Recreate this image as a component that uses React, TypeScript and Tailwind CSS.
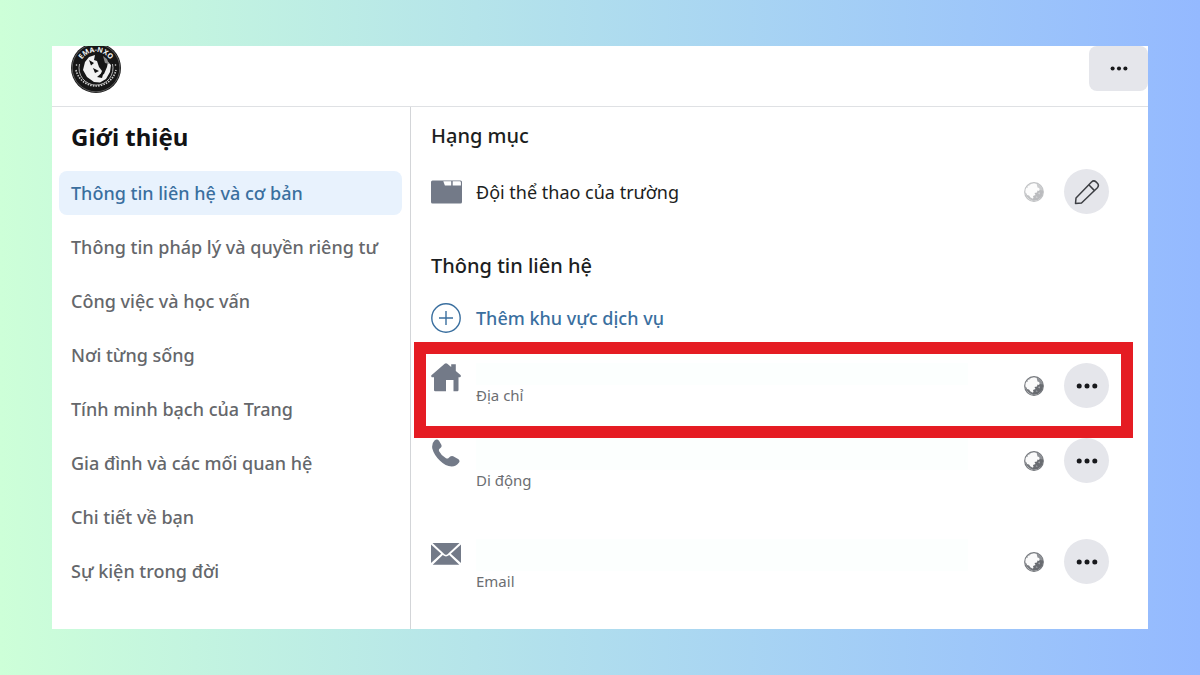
import type { ReactNode } from 'react'
import clsx from 'clsx'

const navItems = [
  'Thông tin liên hệ và cơ bản',
  'Thông tin pháp lý và quyền riêng tư',
  'Công việc và học vấn',
  'Nơi từng sống',
  'Tính minh bạch của Trang',
  'Gia đình và các mối quan hệ',
  'Chi tiết về bạn',
  'Sự kiện trong đời',
]

function Logo() {
  return (
    <svg viewBox="0 0 52 52" className="size-[52px] shrink-0" role="img" aria-label="EMA-NXO">
      <defs>
        <path id="logo-top" d="M9 27a17 17 0 0 1 34 0" />
      </defs>
      <circle cx="26" cy="26" r="25" fill="#161616" />
      <circle cx="26" cy="26" r="23.800" fill="none" stroke="#8a8a8a" strokeWidth=".6" />
      <path d="M9.500 22a17 17 0 1 0 33 0" fill="none" stroke="#b5b5b5" strokeWidth="1" />
      <path d="M15 20l4-5 6-2-1 5 3 1 2 6 3 4-2 5 4-2 3-7 1-5 3 3-1 7-4 7-6 3.500-6-.5-7-5-4-7z" fill="#f1f1f1" />
      <path d="M19 18l5 3-3 2.500zM23 26l6 3-4 2zM27 35l7-6-2 7z" fill="#111" />
      <path d="M33 14l4 3 2 5-4-1z" fill="#8a8a8a" />
      <text fill="#f5f5f5" fontSize="7" fontWeight="700" textAnchor="middle">
        <textPath href="#logo-top" startOffset="50%">EMA-NXO</textPath>
      </text>
      <path d="M6 28a20.500 20.500 0 0 0 40 0" fill="none" stroke="#cfcfcf" strokeWidth="1.600" strokeDasharray="1.500 1.200" />
      <circle cx="6.500" cy="23" r=".8" fill="#ddd" />
      <circle cx="45.500" cy="23" r=".8" fill="#ddd" />
    </svg>
  )
}

function GlobeIcon({ faded = false }: { faded?: boolean }) {
  return (
    <svg viewBox="0 0 20 20" className={clsx('size-5 shrink-0', faded && 'opacity-45')} aria-hidden="true">
      <circle cx="10" cy="10" r="9.300" fill="#fafafa" stroke="#74777c" strokeWidth="1.200" />
      <path d="M18.500 6.500q1.800 5-1.500 9-3.500 3.800-8 3.300l-1.500-1.300 2-1.500-.5-2 2.500-1-1-2 2.500-.5.500-2 1.500.5 1-2z" fill="#686b70" />
      <path d="M1 10.500l1.500 1 .5 1.500 2 .5 1.500 2 2 1 .5 2q-6-1-8-8z" fill="#74777c" />
      <path d="M12.500 1.200q4 1.300 6 5.300v2l-2.500-.5-1-2-1.500-.5-.5-2z" fill="#8d9095" />
      <path d="M2 6q1.500-3 5-4.500l-1 1.800-2 .7-.5 2z" fill="#a0a3a7" />
      <path d="M14 11l2-.5-.5 2zM11.500 15l1.500-.5.500 1.500z" fill="#b5b7bb" />
    </svg>
  )
}

function DotsIcon({ small = false }: { small?: boolean }) {
  return (
    <svg viewBox="0 0 22 6" className={small ? 'h-[5px] w-[18px]' : 'h-[6px] w-[22px]'} fill="#18191c" aria-hidden="true">
      <circle cx="3.200" cy="3" r="2.500" />
      <circle cx="11" cy="3" r="2.500" />
      <circle cx="18.800" cy="3" r="2.500" />
    </svg>
  )
}

function PencilIcon() {
  return (
    <svg viewBox="0 0 26 26" className="size-[26px]" fill="none" stroke="#3c3e43" strokeWidth="1.500" strokeLinejoin="round" aria-hidden="true">
      <path d="M1.500 24.500l.5-5.500L17.500 3q2.300-2.200 4.500-.1l1.400 1.400q2 2.200 0 4.400L7.500 24z" />
      <path d="M14.800 5.800l5.700 5.800" />
    </svg>
  )
}

function FolderIcon() {
  return (
    <svg viewBox="0 0 31 24" className="h-6 w-[31px]" aria-hidden="true">
      <path d="M0 2q0-1.500 1.500-1.500h28Q31 .5 31 2v20q0 1.500-1.500 1.500h-28Q0 23.500 0 22z" fill="#737a88" />
      <path d="M12.300 1.300h7.900v4.200h-6.300zM21.700 1.300h7q1.200 0 1.200 1.200v3h-8.200z" fill="#fff" />
    </svg>
  )
}

function PlusCircleIcon() {
  return (
    <svg viewBox="0 0 30 30" className="size-[30px]" fill="none" stroke="#3a6f9f" strokeWidth="1.400" aria-hidden="true">
      <circle cx="15" cy="15" r="14.200" />
      <path d="M15 8v14M8 15h14" />
    </svg>
  )
}

function HomeIcon() {
  return (
    <svg viewBox="0 0 30 29" className="h-[29px] w-[30px]" fill="#737a88" aria-hidden="true">
      <path d="M13.700.8q1.300-1 2.600 0l3.900 3.300V1.200h4.600v6.700l4.700 4q1 1.500-.5 2.300H27.500V27q0 1.200-1.200 1.200H22.500V17h-7.500v11.200H4.200Q3 28.200 3 27V14.200H.8Q-.5 13 .7 11.900z" />
    </svg>
  )
}

function PhoneIcon() {
  return (
    <svg viewBox="0 0 30 29" className="mt-px h-[29px] w-[30px]" fill="#737a88" aria-hidden="true">
      <path d="M3.500 1.600Q6-.6 8 1.700l2.200 3.800q1 2-.5 3.300L8.300 10q-.8 1 0 2.600 2.200 4.500 6.700 6.700 1.700.7 2.600-.3l1.600-1.500q1.500-1 3-.3l5.300 3.100q1.700 1.500.5 3.200-2.800 4-7.300 4Q14.500 27.300 9 21.800 3 16 1.300 9.500.5 4.500 3.500 1.600z" />
    </svg>
  )
}

function MailIcon() {
  return (
    <svg viewBox="0 0 30 22" className="mt-1 h-[22px] w-[30px]" fill="#737a88" aria-hidden="true">
      <path d="M1.500 0h27L16.500 11.200q-1.500 1.200-3 0zM0 1.500L10.200 10.700 0 20zM30 1.500v18.500L19.800 10.700zM1.700 21.700L11.800 12q3.200 2.800 6.400 0l10.100 9.700z" />
    </svg>
  )
}

function RoundButton({ label, children }: { label: string; children: ReactNode }) {
  return (
    <button type="button" aria-label={label} className="flex size-[45px] shrink-0 items-center justify-center rounded-full bg-[#e5e6eb]">
      {children}
    </button>
  )
}

type ContactRowProps = {
  icon: ReactNode
  label: string
  compact?: boolean
}

function ContactRow({ icon, label, compact = false }: ContactRowProps) {
  return (
    <div className="flex items-start">
      <div className="w-[45px] shrink-0">{icon}</div>
      <div className="min-w-0 flex-1">
        <div className={clsx('mr-14 bg-[#fcfffe]', compact ? 'h-[22px]' : 'h-8')} />
        <p className="text-[15px] leading-5 text-[#6c6e72]">{label}</p>
      </div>
      <div className="flex items-center gap-5">
        <GlobeIcon />
        <RoundButton label={`Tùy chọn ${label}`}>
          <DotsIcon />
        </RoundButton>
      </div>
    </div>
  )
}

export default function App() {
  return (
    <div className="min-h-screen bg-linear-to-r from-[#cdffd8] to-[#94b9ff] px-[52px] py-[46px] font-['Noto_Sans','Open_Sans',sans-serif]">
      <div className="overflow-hidden bg-white">
        {/* Header */}
        <header className="flex h-[61px] items-start justify-between border-b border-[#dfe1e4] pl-[18px]">
          <div className="-mt-1">
            <Logo />
          </div>
          <button type="button" aria-label="Tùy chọn khác" className="flex h-[45px] w-[59px] items-center justify-center rounded-lg bg-[#e5e6eb]">
            <DotsIcon small />
          </button>
        </header>

        <div className="flex">
          {/* Sidebar */}
          <aside className="w-[359px] shrink-0 border-r border-[#d3d5d8] pt-[14px] pr-2 pb-9 pl-[7px]">
            <h1 className="px-3 text-2xl leading-8 font-bold text-[#111214]">Giới thiệu</h1>
            <nav className="mt-[18px] flex flex-col gap-[10px]">
              {navItems.map((item, i) => (
                <a
                  key={item}
                  href="#"
                  className={clsx(
                    'flex h-11 items-center rounded-lg px-3 text-lg font-medium whitespace-nowrap',
                    i === 0 ? 'bg-[#e8f2fd] text-[#3a6f9f]' : 'text-[#65676b]'
                  )}
                >
                  {item}
                </a>
              ))}
            </nav>
          </aside>

          {/* Details */}
          <main className="min-w-0 flex-1 pt-[15px]">
            <section className="pr-[39px] pl-5">
              <h2 className="text-xl leading-7 font-medium text-[#1c1e21]">Hạng mục</h2>
              <div className="mt-[19px] flex items-center">
                <div className="w-[45px] shrink-0">
                  <FolderIcon />
                </div>
                <p className="flex-1 text-lg text-[#1c1e21]">Đội thể thao của trường</p>
                <div className="flex items-center gap-5">
                  <GlobeIcon faded />
                  <RoundButton label="Chỉnh sửa hạng mục">
                    <PencilIcon />
                  </RoundButton>
                </div>
              </div>
            </section>

            <section className="mt-[38px]">
              <div className="pr-[39px] pl-5">
                <h2 className="text-xl leading-7 font-medium text-[#1c1e21]">Thông tin liên hệ</h2>
                <button type="button" className="mt-[23px] flex items-center gap-[15px] text-lg font-medium text-[#3a6f9f]">
                  <PlusCircleIcon />
                  Thêm khu vực dịch vụ
                </button>
              </div>

              {/* Highlighted address */}
              <div className="mt-[9px] mr-[15px] ml-[3px] border-12 border-[#e51c23] pt-[9px] pr-3 pb-[18px] pl-[5px]">
                <ContactRow icon={<HomeIcon />} label="Địa chỉ" compact />
              </div>

              <div className="flex flex-col gap-[49px] pr-[39px] pl-5">
                <ContactRow icon={<PhoneIcon />} label="Di động" />
                <ContactRow icon={<MailIcon />} label="Email" />
              </div>
            </section>
          </main>
        </div>
      </div>
    </div>
  )
}
